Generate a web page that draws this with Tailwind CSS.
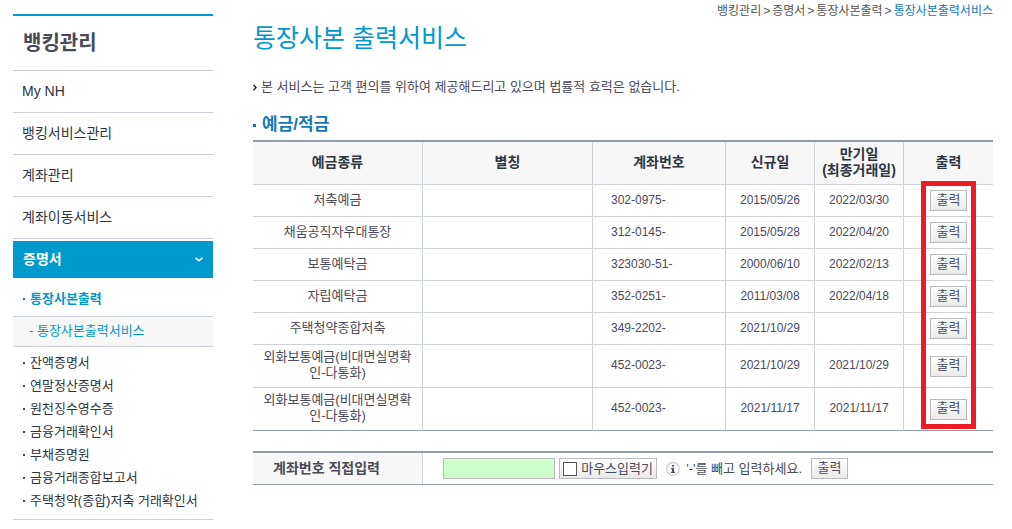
<!DOCTYPE html>
<html lang="ko">
<head>
  <meta charset="UTF-8">
  <meta name="viewport" content="width=device-width, initial-scale=1.0">
  <title>통장사본 출력서비스</title>
  <script src="https://cdn.jsdelivr.net/npm/@tailwindcss/browser@4"></script>
</head>
<body class="bg-white font-['Liberation_Sans','Noto_Sans_CJK_KR',sans-serif] text-[13px] leading-4 text-[#4a4a58]">
  <div class="flex gap-10 pl-[13px] pr-[19px]">
    <!-- 왼쪽 메뉴 -->
    <aside class="mt-[14px] w-[200px] shrink-0 border-t-2 border-[#0099cc] text-[#2d3540]">
      <h2 class="flex h-[55px] items-center border-b border-[#ccd2d9] pl-[10px] text-xl font-bold text-[#4a4a58]">뱅킹관리</h2>
      <nav>
        <ul class="text-sm">
          <li class="border-b border-[#ccd2d9]"><a href="#" class="flex h-[41px] items-center pb-[2px] pl-[9px]">My NH</a></li>
          <li class="border-b border-[#ccd2d9]"><a href="#" class="flex h-[41px] items-center pb-[2px] pl-[9px]">뱅킹서비스관리</a></li>
          <li class="border-b border-[#ccd2d9]"><a href="#" class="flex h-[41px] items-center pb-[2px] pl-[9px]">계좌관리</a></li>
          <li class="border-b border-[#ccd2d9]"><a href="#" class="flex h-[41px] items-center pb-[2px] pl-[9px]">계좌이동서비스</a></li>
          <li class="pt-[2px]">
            <a href="#" class="flex h-[37px] items-center justify-between bg-[#0099cc] pb-[2px] pl-[10px] pr-[10px] font-bold text-white">증명서
              <svg class="mt-[2px] h-[5px] w-2" viewBox="0 0 8 5" fill="none" stroke="currentColor" stroke-width="1.6"><path d="M0.6 0.8L4 3.8L7.4 0.8"/></svg>
            </a>
          </li>
        </ul>
        <ul class="border-b border-[#ccd2d9] pb-[7px]">
          <li>
            <a href="#" class="flex h-[38px] items-center gap-[5px] pl-[10px] pt-1 font-bold text-[#0099cc]"><span class="size-[2px] bg-[#1478b9]"></span>통장사본출력</a>
            <a href="#" class="flex h-[31px] items-center border-y border-[#ccd2d9] bg-[#f7f7f7] pb-[2px] pl-4 text-[#0099cc]">- 통장사본출력서비스</a>
          </li>
          <li class="pt-1"><a href="#" class="flex h-[23px] items-center gap-[5px] pl-[10px]"><span class="size-[2px] bg-[#4a4a4a]"></span>잔액증명서</a></li>
          <li><a href="#" class="flex h-[23px] items-center gap-[5px] pl-[10px]"><span class="size-[2px] bg-[#4a4a4a]"></span>연말정산증명서</a></li>
          <li><a href="#" class="flex h-[23px] items-center gap-[5px] pl-[10px]"><span class="size-[2px] bg-[#4a4a4a]"></span>원천징수영수증</a></li>
          <li><a href="#" class="flex h-[23px] items-center gap-[5px] pl-[10px]"><span class="size-[2px] bg-[#4a4a4a]"></span>금융거래확인서</a></li>
          <li><a href="#" class="flex h-[23px] items-center gap-[5px] pl-[10px]"><span class="size-[2px] bg-[#4a4a4a]"></span>부채증명원</a></li>
          <li><a href="#" class="flex h-[23px] items-center gap-[5px] pl-[10px]"><span class="size-[2px] bg-[#4a4a4a]"></span>금융거래종합보고서</a></li>
          <li><a href="#" class="flex h-[23px] items-center gap-[5px] whitespace-nowrap pl-[10px]"><span class="size-[2px] bg-[#4a4a4a]"></span>주택청약(종합)저축 거래확인서</a></li>
        </ul>
      </nav>
    </aside>

    <main class="min-w-0 flex-1">
      <p class="flex h-[22px] items-center justify-end gap-[2px] text-xs text-[#555]">
        <a href="#">뱅킹관리</a><span>&gt;</span><a href="#">증명서</a><span>&gt;</span><a href="#">통장사본출력</a><span>&gt;</span><a href="#" class="text-[#1478b9]">통장사본출력서비스</a>
      </p>
      <h1 class="flex h-8 items-center text-[25px] text-[#0099cc]">통장사본 출력서비스</h1>
      <p class="mt-[25px] flex items-center gap-1">
        <svg class="h-[7px] w-1 shrink-0" viewBox="0 0 4 7" fill="none" stroke="#222" stroke-width="1.4"><path d="M0.5 0.8L3 3.5L0.5 6.2"/></svg>
        본 서비스는 고객 편의를 위하여 제공해드리고 있으며 법률적 효력은 없습니다.
      </p>
      <h3 class="mt-[22px] flex items-center gap-[6px] text-[17px] leading-4 font-bold text-[#1478b9]"><span class="size-[3px] bg-[#1478b9]"></span>예금/적금</h3>

      <div class="relative mt-[7px]">
        <table class="w-full table-fixed border-separate border-spacing-0 border-t-2 border-[#929daa] text-center">
          <colgroup>
            <col><col><col class="w-[133px]"><col class="w-[89px]"><col class="w-[89px]"><col class="w-[89px]">
          </colgroup>
          <thead class="bg-[#f7f7f7] text-sm leading-4 text-[#2d3540]">
            <tr class="h-[43px]">
              <th class="border-b border-r border-[#ccd2d9] pb-[3px]">예금종류</th>
              <th class="border-b border-r border-[#ccd2d9] pb-[3px]">별칭</th>
              <th class="border-b border-r border-[#ccd2d9] pb-[3px]">계좌번호</th>
              <th class="border-b border-r border-[#ccd2d9] pb-[3px]">신규일</th>
              <th class="border-b border-r border-[#ccd2d9] pb-[3px]">만기일<br>(최종거래일)</th>
              <th class="border-b border-[#ccd2d9] pb-[3px]">출력</th>
            </tr>
          </thead>
          <tbody>
            <tr class="h-8">
              <td class="border-b border-r border-[#ccd2d9] px-2 pb-[2px]">저축예금</td>
              <td class="border-b border-r border-[#ccd2d9]"></td>
              <td class="border-b border-r border-[#ccd2d9] pb-[2px] pl-[18px] text-left text-xs">302-0975-</td>
              <td class="border-b border-r border-[#ccd2d9] pb-[2px] text-xs">2015/05/26</td>
              <td class="border-b border-r border-[#ccd2d9] pb-[2px] text-xs">2022/03/30</td>
              <td class="border-b border-[#ccd2d9]"><button type="button" class="block mx-auto h-[21px] w-[37px] border border-[#bbb] bg-linear-to-b from-white to-[#eaeaea] pb-[2px]">출력</button></td>
            </tr>
            <tr class="h-8">
              <td class="border-b border-r border-[#ccd2d9] px-2 pb-[2px]">채움공직자우대통장</td>
              <td class="border-b border-r border-[#ccd2d9]"></td>
              <td class="border-b border-r border-[#ccd2d9] pb-[2px] pl-[18px] text-left text-xs">312-0145-</td>
              <td class="border-b border-r border-[#ccd2d9] pb-[2px] text-xs">2015/05/28</td>
              <td class="border-b border-r border-[#ccd2d9] pb-[2px] text-xs">2022/04/20</td>
              <td class="border-b border-[#ccd2d9]"><button type="button" class="block mx-auto h-[21px] w-[37px] border border-[#bbb] bg-linear-to-b from-white to-[#eaeaea] pb-[2px]">출력</button></td>
            </tr>
            <tr class="h-8">
              <td class="border-b border-r border-[#ccd2d9] px-2 pb-[2px]">보통예탁금</td>
              <td class="border-b border-r border-[#ccd2d9]"></td>
              <td class="border-b border-r border-[#ccd2d9] pb-[2px] pl-[18px] text-left text-xs">323030-51-</td>
              <td class="border-b border-r border-[#ccd2d9] pb-[2px] text-xs">2000/06/10</td>
              <td class="border-b border-r border-[#ccd2d9] pb-[2px] text-xs">2022/02/13</td>
              <td class="border-b border-[#ccd2d9]"><button type="button" class="block mx-auto h-[21px] w-[37px] border border-[#bbb] bg-linear-to-b from-white to-[#eaeaea] pb-[2px]">출력</button></td>
            </tr>
            <tr class="h-8">
              <td class="border-b border-r border-[#ccd2d9] px-2 pb-[2px]">자립예탁금</td>
              <td class="border-b border-r border-[#ccd2d9]"></td>
              <td class="border-b border-r border-[#ccd2d9] pb-[2px] pl-[18px] text-left text-xs">352-0251-</td>
              <td class="border-b border-r border-[#ccd2d9] pb-[2px] text-xs">2011/03/08</td>
              <td class="border-b border-r border-[#ccd2d9] pb-[2px] text-xs">2022/04/18</td>
              <td class="border-b border-[#ccd2d9]"><button type="button" class="block mx-auto h-[21px] w-[37px] border border-[#bbb] bg-linear-to-b from-white to-[#eaeaea] pb-[2px]">출력</button></td>
            </tr>
            <tr class="h-8">
              <td class="border-b border-r border-[#ccd2d9] px-2 pb-[2px]">주택청약종합저축</td>
              <td class="border-b border-r border-[#ccd2d9]"></td>
              <td class="border-b border-r border-[#ccd2d9] pb-[2px] pl-[18px] text-left text-xs">349-2202-</td>
              <td class="border-b border-r border-[#ccd2d9] pb-[2px] text-xs">2021/10/29</td>
              <td class="border-b border-r border-[#ccd2d9] pb-[2px] text-xs"></td>
              <td class="border-b border-[#ccd2d9]"><button type="button" class="block mx-auto h-[21px] w-[37px] border border-[#bbb] bg-linear-to-b from-white to-[#eaeaea] pb-[2px]">출력</button></td>
            </tr>
            <tr class="h-[43px]">
              <td class="border-b border-r border-[#ccd2d9] px-2 pb-[3px]">외화보통예금(비대면실명확인-다통화)</td>
              <td class="border-b border-r border-[#ccd2d9]"></td>
              <td class="border-b border-r border-[#ccd2d9] pb-[3px] pl-[18px] text-left text-xs">452-0023-</td>
              <td class="border-b border-r border-[#ccd2d9] pb-[3px] text-xs">2021/10/29</td>
              <td class="border-b border-r border-[#ccd2d9] pb-[3px] text-xs">2021/10/29</td>
              <td class="border-b border-[#ccd2d9]"><button type="button" class="block mx-auto h-[21px] w-[37px] border border-[#bbb] bg-linear-to-b from-white to-[#eaeaea] pb-[2px]">출력</button></td>
            </tr>
            <tr class="h-[43px]">
              <td class="border-b border-r border-r-[#ccd2d9] border-b-[#929daa] px-2 pb-[3px]">외화보통예금(비대면실명확인-다통화)</td>
              <td class="border-b border-r border-r-[#ccd2d9] border-b-[#929daa]"></td>
              <td class="border-b border-r border-r-[#ccd2d9] border-b-[#929daa] pb-[3px] pl-[18px] text-left text-xs">452-0023-</td>
              <td class="border-b border-r border-r-[#ccd2d9] border-b-[#929daa] pb-[3px] text-xs">2021/11/17</td>
              <td class="border-b border-r border-r-[#ccd2d9] border-b-[#929daa] pb-[3px] text-xs">2021/11/17</td>
              <td class="border-b border-[#929daa]"><button type="button" class="block mx-auto h-[21px] w-[37px] border border-[#bbb] bg-linear-to-b from-white to-[#eaeaea] pb-[2px]">출력</button></td>
            </tr>
          </tbody>
        </table>
        <!-- 출력 버튼 강조 -->
        <div class="pointer-events-none absolute top-[41px] right-[17px] bottom-[2px] w-[55px] border-5 border-[#ed1c24]"></div>
      </div>

      <form class="mt-5 flex border-t-2 border-b border-[#929daa]">
        <label for="account" class="flex w-[23%] items-center border-r border-[#ccd2d9] bg-[#f7f7f7] pb-[2px] pl-5 text-sm leading-4 font-bold">계좌번호 직접입력</label>
        <div class="flex h-[31px] items-center pl-5">
          <input type="text" id="account" class="h-[21px] w-28 border border-[#bbb] bg-[#ccffcc] px-1">
          <label class="ml-1 flex h-[21px] w-[98px] items-center gap-1 whitespace-nowrap border border-[#bbb] bg-linear-to-b from-white to-[#eaeaea] pl-[3px]">
            <input type="checkbox" class="size-[14px] appearance-none border border-[#555] bg-white">마우스입력기
          </label>
          <svg class="ml-[9px] size-[14px]" viewBox="0 0 14 14"><circle cx="7" cy="7" r="6.3" fill="#fff" stroke="#c5cdd5" stroke-width="1.2"/><path d="M6 3h2v1.6H6zM5 5.8h3v4h1V11H5V9.800h1V7H5z" fill="#555"/></svg>
          <span class="ml-[6px] whitespace-nowrap">'-'를 빼고 입력하세요.</span>
          <button type="button" class="ml-[9px] h-[21px] w-[37px] border border-[#bbb] bg-linear-to-b from-white to-[#eaeaea] pb-[2px]">출력</button>
        </div>
      </form>
    </main>
  </div>
</body>
</html>
